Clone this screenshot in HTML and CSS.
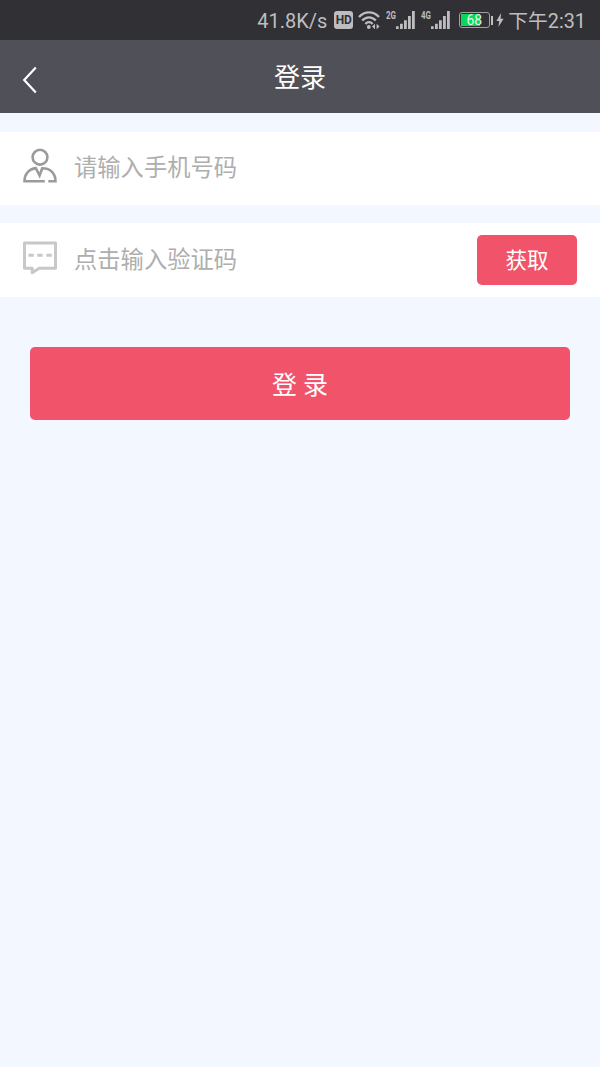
FILE: index.html
```html
<!DOCTYPE html>
<html lang="zh-CN">
<head>
    <meta charset="UTF-8">
    <meta name="viewport" content="width=device-width, initial-scale=1.0">
    <title>登录</title>
    <link rel="stylesheet" href="styles.css">
</head>
<body>
    <!-- Status bar -->
    <div class="status-bar">
        <span class="speed">41.8K/s</span>
        <span class="hd">HD</span>
        <svg class="wifi" width="23" height="20" viewBox="0 0 23 20" fill="none" stroke="#bebec0" stroke-width="2.3">
            <path d="M1 7C6.6.8 15.4.8 21 7"/>
            <path d="M4.2 10.6c4-4.4 9.6-4.4 13.6 0"/>
            <path d="M7.4 14c2.2-2.4 5-2.4 7.2 0"/>
            <circle cx="10.8" cy="17" r="1.9" fill="#bebec0" stroke="none"/>
            <path d="M17 13.8v5.4l-3-2.7zM18.6 13.8v5.4l3-2.7z" fill="#bebec0" stroke="none"/>
        </svg>
        <div class="signal">
            <span class="signal-type">2G</span>
            <svg width="20" height="20" viewBox="0 0 20 20" fill="#bebec0">
                <path d="M0 16.2h2.7V19H0zM4 13.7h2.8V19H4zM8 10.2h2.8V19H8zM12 6h2.8v13H12zM16 1h2.8v18H16z"/>
            </svg>
        </div>
        <div class="signal">
            <span class="signal-type">4G</span>
            <svg width="20" height="20" viewBox="0 0 20 20" fill="#bebec0">
                <path d="M0 16.2h2.7V19H0zM4 13.7h2.8V19H4zM8 10.2h2.8V19H8zM12 6h2.8v13H12zM16 1h2.8v18H16z"/>
            </svg>
        </div>
        <div class="battery"><span class="battery-level">68</span></div>
        <span class="battery-cap"></span>
        <svg class="bolt" width="8" height="16" viewBox="0 0 8 16" fill="#bebec0">
            <path d="M5.2 1L.4 9h2.8L2.4 15 7.6 6.8H4.6z"/>
        </svg>
        <span class="time">下午2:31</span>
    </div>

    <!-- Header -->
    <header class="header">
        <a class="back">
            <svg width="16" height="28" viewBox="0 0 16 28" fill="none" stroke="#fff" stroke-width="2.2">
                <path d="M13.8 1.6L2.2 14l11.6 12.4"/>
            </svg>
        </a>
        <h1 class="title">登录</h1>
    </header>

    <!-- Login form -->
    <main class="form">
        <div class="field">
            <svg class="field-icon" width="36" height="36" viewBox="0 0 36 36" fill="none" stroke="#9b9b9b" stroke-width="2.6">
                <circle cx="18" cy="9.2" r="7.4"/>
                <path d="M22.8 33.3H2.5c0-7.4 4.4-12.2 11.3-13.2l3.8 7.4 2.6-7.2c8.4-.2 13.3 5.6 13.3 13h-7.2"/>
            </svg>
            <span class="placeholder">请输入手机号码</span>
        </div>
        <div class="field">
            <svg class="field-icon" width="36" height="36" viewBox="0 0 36 36" fill="none" stroke="#c8c8c8" stroke-width="3">
                <path d="M2.5 3h31v25.3H17.2l-7 4.4v-4.4H2.5z" stroke-linejoin="round"/>
                <path d="M6.4 15.2h5.4M15.3 15.2h5.4M24.4 15.2h5.4"/>
            </svg>
            <span class="placeholder">点击输入验证码</span>
            <button class="get-code">获取</button>
        </div>
        <button class="login">登 录</button>
    </main>
</body>
</html>
```

FILE: styles.css
```css
* {
    box-sizing: border-box;
}

body {
    margin: 0;
    min-height: 100vh;
    background: #f3f7ff;
    font-family: Roboto, "Noto Sans CJK SC", sans-serif;
}

svg {
    display: block;
    flex-shrink: 0;
}

button {
    border: none;
    padding: 0 0 3px;
    color: #fff;
    background: #f1546a;
    font-family: inherit;
    border-radius: 5px;
}

/* Status bar */
.status-bar {
    display: flex;
    align-items: center;
    justify-content: flex-end;
    height: 40px;
    padding-right: 14px;
    background: #303035;
    color: #bebec0;
    white-space: nowrap;
}

.speed {
    padding-top: 2px;
    font-size: 20px;
}

.hd {
    width: 19px;
    height: 18px;
    margin: 0 5px 0 7px;
    border-radius: 3px;
    background: #bebec0;
    color: #303035;
    font-size: 12px;
    font-weight: bold;
    line-height: 18px;
    text-align: center;
}

.signal {
    display: flex;
    align-items: flex-start;
    margin-left: 5px;
}

.signal-type {
    width: 10px;
    font-size: 11px;
    font-weight: bold;
    line-height: 11px;
    transform: scaleX(0.72);
    transform-origin: left;
}

.battery {
    width: 31px;
    height: 16px;
    margin-left: 8px;
    padding: 1px;
    border: 1px solid #a0a0a2;
    border-radius: 3px;
    background: linear-gradient(#06d85c, #06d85c) 1px 1px / 19px 12px no-repeat;
    text-align: center;
}

.battery-level {
    display: block;
    padding-right: 1px;
    color: #e4f4e9;
    font-size: 14px;
    line-height: 13px;
}

.battery-cap {
    width: 2px;
    height: 9px;
    margin: 0 3px 0 1px;
    background: #bebec0;
}

.time {
    margin-left: 4px;
    padding-bottom: 2px;
    font-size: 19.8px;
}

/* Header */
.header {
    display: flex;
    align-items: center;
    height: 73px;
    padding: 0 22px;
    background: #505158;
    color: #fff;
}

.back {
    width: 16px;
    padding-top: 7px;
}

.title {
    flex: 1;
    margin: 0 16px 0 0;
    padding-bottom: 2px;
    font-size: 26px;
    font-weight: normal;
    text-align: center;
}

/* Form */
.form {
    display: flex;
    flex-direction: column;
    gap: 18.4px;
    padding-top: 18.6px;
}

.field {
    display: flex;
    align-items: center;
    height: 73.4px;
    padding: 0 23px 0 22px;
    background: #fff;
}

.field-icon {
    margin-bottom: 4px;
}

.placeholder {
    flex: 1;
    margin-left: 16px;
    padding-bottom: 5px;
    color: #aeaeae;
    font-size: 23.3px;
}

.get-code {
    width: 100px;
    height: 50px;
    font-size: 21.5px;
}

.login {
    height: 73px;
    margin: 31.6px 30px 0;
    padding-bottom: 1px;
    font-size: 25px;
}
```
